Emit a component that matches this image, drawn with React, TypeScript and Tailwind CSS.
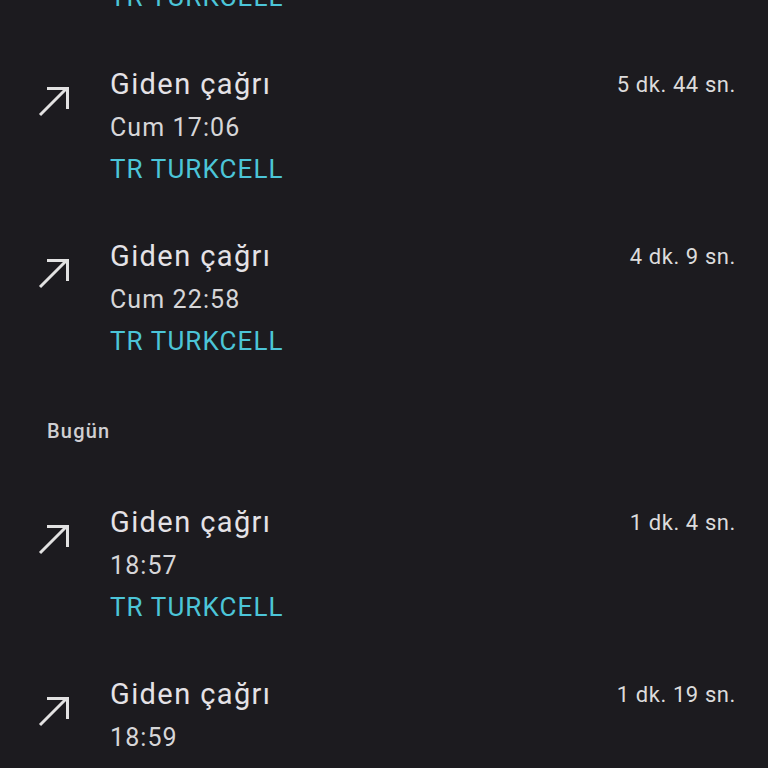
import React from "react";

const Arrow = () => (
  <svg width="32" height="32" viewBox="0 0 32 32" fill="none" stroke="#e2e2e2" strokeWidth="3" strokeLinecap="butt">
    <path d="M2 30 L29 3" />
    <path d="M9 3.5 H29.5 V24" />
  </svg>
);

type Call = { time: string; duration: string; carrier?: boolean };

const Row = ({ time, duration, carrier = true }: Call) => (
  <div className="flex py-[21.5px]">
    <div className="w-[110px] shrink-0 pl-[38px] pt-[23px]">
      <Arrow />
    </div>
    <div className="flex-1 pr-[32px]">
      <div className="flex h-[43px] items-center justify-between pt-[3px]">
        <span className="text-[29px] tracking-[1.4px] text-[#e4e2e6]">Giden çağrı</span>
        <span className="text-[22px] tracking-[0.6px] text-[#dcdcdc]">{duration}</span>
      </div>
      <div className="flex h-[43px] items-center pt-[3px] text-[25px] tracking-[1.1px] text-[#d6d6d8]">{time}</div>
      {carrier && (
        <div className="flex h-[43px] items-center text-[26px] tracking-[1.1px] text-[#4cc5d8]">TR TURKCELL</div>
      )}
    </div>
  </div>
);

export default function App() {
  return (
    <div
      className="h-[768px] w-[768px] overflow-hidden bg-[#1c1b1f]"
      style={{ fontFamily: "Roboto, 'Noto Sans', sans-serif" }}
    >
      <div className="pb-[21.5px] pl-[110px] mt-[-24.5px]">
        <div className="flex h-[43px] items-center text-[26px] tracking-[1.1px] text-[#4cc5d8]">TR TURKCELL</div>
      </div>
      <Row time="Cum 17:06" duration="5 dk. 44 sn." />
      <Row time="Cum 22:58" duration="4 dk. 9 sn." />
      <div className="flex h-[94px] items-center pl-[47px] text-[20px] font-medium tracking-[1.2px] text-[#cfcfd2]">Bugün</div>
      <Row time="18:57" duration="1 dk. 4 sn." />
      <Row time="18:59" duration="1 dk. 19 sn." />
    </div>
  );
}
